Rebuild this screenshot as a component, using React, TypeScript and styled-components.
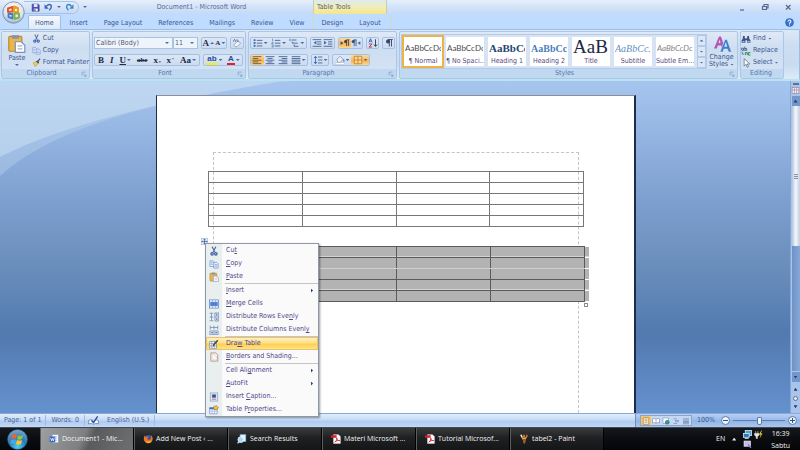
import React from "react";
import styled, { createGlobalStyle, css } from "styled-components";

const GlobalStyle = createGlobalStyle`
  *, *::before, *::after { box-sizing: border-box; }
  body { margin: 0; background: #bfdbff; }
  button, select, input { font: inherit; color: inherit; margin: 0; padding: 0; border: 0; background: none; }
`;

const uiFont = `"DejaVu Sans Condensed", "DejaVu Sans", sans-serif`;
const shellFont = `"Open Sans", "Noto Sans", sans-serif`;

/* ---------- icons ---------- */

const blue = "#3d6cb5";
const lines = (rows: number[][], color = "#445f8c") => (
  <g fill={color}>
    {rows.map(([x, y, w], i) => (
      <rect key={i} x={x} y={y} width={w} height="1.4" />
    ))}
  </g>
);

const glyphs: Record<string, React.ReactNode> = {
  save: (
    <>
      <path d="M2 2h11l1.500 1.500V14.500H2z" fill="#4a50b4" stroke="#33358c" />
      <path d="M5 2h6.500v5H5z" fill="#e8ecfa" />
      <path d="M5 10h7v4.500H5z" fill="#f6f7fd" />
      <path d="M6 11h2v3H6z" fill="#33358c" />
    </>
  ),
  undo: (
    <>
      <path d="M4 6c3-4.500 8-4.500 9-1s-1.500 6-3.500 8" fill="none" stroke="#3a66c0" strokeWidth="2.600" />
      <path d="M1 2v8h7.500z" fill="#3a66c0" />
    </>
  ),
  redo: (
    <>
      <path d="M11.500 6C8.500 1.500 4 2 3 5.500s1 5.500 3 7.500" fill="none" stroke="#3a84c8" strokeWidth="2.600" />
      <path d="M15 2v8H7.500z" fill="#3a84c8" />
    </>
  ),
  cut: (
    <g fill="none" stroke="#2f57a8" strokeWidth="1.800">
      <path d="M5 1l4.500 9M11 1 6.500 10" stroke="#5b6f96" />
      <circle cx="5" cy="12.500" r="2" />
      <circle cx="11" cy="12.500" r="2" />
    </g>
  ),
  copy: (
    <g stroke="#5b83c8" fill="#eef4ff">
      <path d="M1.500 3h5l2 2v7h-7z" />
      <path d="M7.500 5.500h5l2 2v7h-7z" />
      <path d="M3 6h3M3 8.500h3M9 9h4M9 11.500h4" />
    </g>
  ),
  painter: (
    <>
      <path d="M2 9l6-3 3 4-5 5z" fill="#f3cf55" stroke="#b88a22" />
      <path d="M7 6l3-2 3 3-2 3z" fill="#4b5568" />
      <path d="M11 5l3.500-4" stroke="#3c4c7a" strokeWidth="2" />
    </>
  ),
  paste: (
    <>
      <rect x="1.500" y="2" width="11" height="12.500" rx="1" fill="#eab64b" stroke="#b98a34" />
      <path d="M4 1h6v3H4z" fill="#8593ad" />
      <path d="M7 6.500h5l3 3v6H7z" fill="#fff" stroke="#7f93b5" />
      <path d="M9 10h4M9 12.500h4" stroke="#9fb4d8" />
    </>
  ),
  clear: (
    <>
      <path d="M3 11l6-6 5 3-6 6H5z" fill="#f2f4fa" stroke="#7b86a5" />
      <path d="M2 6l2-4 2 4M8 2v3h3" fill="none" stroke="#56688f" strokeWidth="1.300" />
    </>
  ),
  bullets: (
    <>
      {lines([[6, 3, 9], [6, 7.500, 9], [6, 12, 9]])}
      <g fill={blue}>
        <rect x="1" y="2" width="3" height="3" />
        <rect x="1" y="6.500" width="3" height="3" />
        <rect x="1" y="11" width="3" height="3" />
      </g>
    </>
  ),
  numbers: (
    <>
      {lines([[6, 3, 9], [6, 7.500, 9], [6, 12, 9]])}
      <path d="M2.500 1v4M1 7h2.500L1 9.500h3M1 11.500h2.500v3H1" stroke={blue} fill="none" />
    </>
  ),
  multi: (
    <>
      {lines([[4, 2.500, 8], [7, 7.500, 7], [10, 12.500, 5]])}
      <path d="M1.500 1v4M4 6.500h2v3M7 11.500h2v3" stroke={blue} fill="none" strokeWidth="1.400" />
    </>
  ),
  outdent: (
    <>
      {lines([[1, 2, 14], [8, 5.500, 7], [8, 9, 7], [1, 12.500, 14]])}
      <path d="M7 4.500v6L2.500 7.500z" fill={blue} />
    </>
  ),
  indent: (
    <>
      {lines([[1, 2, 14], [8, 5.500, 7], [8, 9, 7], [1, 12.500, 14]])}
      <path d="M1.500 4.500v6L6 7.500z" fill={blue} />
    </>
  ),
  ltr: (
    <>
      <path d="M1 5v6l4.500-3z" fill="#3a4f86" />
      <path d="M10 3h5M10.500 3v10M13.500 3v10" stroke="#3b3b4d" strokeWidth="1.300" />
      <circle cx="9" cy="5.500" r="2.500" fill="#3b3b4d" />
    </>
  ),
  rtl: (
    <>
      <path d="M15 5v6l-4.500-3z" fill="#3a66c0" />
      <path d="M4 3h5M5 3v10M8 3v10" stroke="#3b4a70" strokeWidth="1.300" />
      <circle cx="3.500" cy="5.500" r="2.500" fill="#3b4a70" />
    </>
  ),
  sort: (
    <>
      <path d="M1.500 7 4 1l2.500 6M2.500 5h3" stroke="#2f57b8" fill="none" strokeWidth="1.400" />
      <path d="M1.500 9.500h5l-5 5h5" stroke="#a33350" fill="none" strokeWidth="1.400" />
      <path d="M12 2v11M9.500 10.500 12 13.500l2.500-3" stroke="#333c55" fill="none" strokeWidth="1.500" />
    </>
  ),
  pilcrow: (
    <>
      <path d="M6 2.500h8M8.500 2.500v11M12 2.500v11" stroke="#39466b" strokeWidth="1.500" />
      <circle cx="6.500" cy="5.500" r="3.300" fill="#39466b" />
    </>
  ),
  alignLeft: lines([[1, 2, 14], [1, 4.800, 9], [1, 7.600, 14], [1, 10.400, 9], [1, 13.200, 14]], "#6b553a"),
  alignCenter: lines([[1, 2, 14], [4, 4.800, 8], [1, 7.600, 14], [4, 10.400, 8], [1, 13.200, 14]]),
  alignRight: lines([[1, 2, 14], [6, 4.800, 9], [1, 7.600, 14], [6, 10.400, 9], [1, 13.200, 14]]),
  justify: lines([[1, 2, 14], [1, 4.800, 14], [1, 7.600, 14], [1, 10.400, 14], [1, 13.200, 14]]),
  spacing: (
    <>
      {lines([[8, 2.500, 7], [8, 7.300, 7], [8, 12, 7]])}
      <path d="M4 2v12M1.500 5 4 2l2.500 3M1.500 11 4 14l2.500-3" stroke={blue} fill="none" strokeWidth="1.500" />
    </>
  ),
  bucket: (
    <>
      <path d="M3 7l5-5 5 5-5 5H5z" fill="#eef1f8" stroke="#6c7ba0" />
      <path d="M13 7c2 2 1.500 4 .5 4" stroke={blue} fill="none" strokeWidth="1.600" />
      <rect x="1" y="12.500" width="14" height="3" fill="#fff" stroke="#9aa5bd" strokeWidth=".6" />
    </>
  ),
  borders: (
    <path d="M2 2h12v12H2zM8 2v12M2 8h12" fill="#fbd68c" stroke="#b9762a" strokeWidth="1.200" />
  ),
  find: (
    <g fill="#3b5484">
      <path d="M3 3h3v3l1 1h2l1-1V3h3v4l2 3v4h-5v-4H7v4H1v-4l2-3z" />
      <path d="M2.500 11h3v2h-3zM11 11h3v2h-3z" fill="#a9c2ea" />
    </g>
  ),
  replace: (
    <>
      <path d="M1 6.500V3.500h3v3.500H1.500M6 1v6h3V4H6" stroke="#46597f" fill="none" strokeWidth="1.400" />
      <path d="M7 14.500v-4h3v4M15 10.500h-3v4h3" stroke="#2d8a4a" fill="none" strokeWidth="1.500" />
      <path d="M2 9v4h3" stroke={blue} fill="none" strokeWidth="1.300" />
    </>
  ),
  pointer: <path d="M5 1v12l3-3 2 5 2-1-2-4.500h4z" fill="#fff" stroke="#5b6a8a" strokeWidth="1.200" />,
  merge: (
    <>
      <rect x="1" y="1.500" width="14" height="13" fill="#fff" stroke="#3d6cb5" />
      <path d="M1 5h14M1 11h14M5.500 2v3M10.500 2v3M5.500 11v3M10.500 11v3" stroke="#6f97d6" />
      <rect x="2" y="5" width="12" height="6" fill="#4a80d6" />
    </>
  ),
  distRows: (
    <>
      <path d="M1 2h6M1 8h6M1 14h6M4 2v12M9.500 1.500h6v13h-6zM9.500 8h6" fill="none" stroke="#6f8fbd" strokeWidth="1.300" />
      <path d="M12.500 3v3M12.500 10v3" stroke="#2f57a8" strokeWidth="1.500" />
    </>
  ),
  distCols: (
    <>
      <path d="M2 1v6M8 1v6M14 1v6M2 4h12M1.500 9.500v6h13v-6zM8 9.500v6" fill="none" stroke="#6f8fbd" strokeWidth="1.300" />
      <path d="M3.500 12.500h3M10 12.500h3" stroke="#2f57a8" strokeWidth="1.500" />
    </>
  ),
  drawTable: (
    <>
      <path d="M1 4h11v11H1zM1 7.500h11M1 11h11M4.500 4v11M8.500 4v11" fill="#fff" stroke="#5b83c8" />
      <path d="M7 10l7-8" stroke="#554a2d" strokeWidth="2.400" />
      <path d="M6 12l.5-2.500L8.500 11z" fill="#222" />
    </>
  ),
  pageBorder: (
    <>
      <path d="M3 1.500h8l3 3v10H3z" fill="#fff" stroke="#b98a62" strokeWidth="1.400" />
      <path d="M5 4h4.500v2H12v6.500H5z" fill="#f4f7fd" stroke="#c9d3e6" />
    </>
  ),
  caption: (
    <>
      <rect x="2" y="1.500" width="12" height="13" fill="#dbe5f6" stroke="#8298c0" />
      <rect x="5" y="4" width="6" height="5" fill="#39528a" />
      <path d="M5 11.500h6" stroke="#a33350" />
    </>
  ),
  tableProps: (
    <>
      <path d="M1 4h12v10H1z" fill="#fff" stroke="#5b83c8" />
      <path d="M1 4h12v3H1z" fill="#3f72c8" />
      <path d="M1 10h12M5 7v7M9 7v7" stroke="#8aa8dc" />
      <path d="M7 3l5-2 3 3-3 4-4-1z" fill="#f0c04a" stroke="#9b7420" />
    </>
  ),
  help: (
    <>
      <circle cx="8" cy="8" r="7" fill="#3a75d0" stroke="#2453a0" />
      <path d="M5.500 6c0-3.500 5-3 5 0 0 2-2.500 2-2.500 4M8 11.500v2" stroke="#fff" strokeWidth="1.800" fill="none" />
    </>
  ),
  move: (
    <>
      <rect x=".5" y=".5" width="15" height="15" fill="#eaf1fc" stroke="#8ca0c4" />
      <path d="M8 2v12M2 8h12M6 4l2-2 2 2M6 12l2 2 2-2M4 6 2 8l2 2M12 6l2 2-2 2" stroke="#2f4f9a" fill="none" strokeWidth="1.500" />
    </>
  ),
  proof: (
    <>
      <path d="M1 8c3-2 5-1 7 1 2-2 4-3 7-1v5c-3-1-5-1-7 1-2-2-4-2-7-1z" fill="#fff" stroke="#51699c" />
      <path d="M5 8l3 3 6-9" stroke="#2b4fa5" strokeWidth="2" fill="none" />
    </>
  ),
  viewPrint: <path d="M2.500 1.500h11v13h-11zM5 4.500h6M5 7.500h6M5 10.500h6" fill="#fffbe9" stroke="#8b6b3a" strokeWidth="1.200" />,
  viewRead: <path d="M1 4c3-1.500 5-1 7 1 2-2 4-2.500 7-1v8c-3-1-5-1-7 1-2-2-4-2-7-1zM8 5v8" fill="#fff" stroke="#6b7f9f" strokeWidth="1.200" />,
  viewWeb: (
    <>
      <path d="M2 2h11v11H2z" fill="#fff" stroke="#6b7f9f" />
      <circle cx="10.500" cy="10.500" r="4" fill="#3a9a6c" stroke="#2a63b5" />
    </>
  ),
  viewOutline: lines([[3, 3, 7], [6, 6, 8], [6, 9, 8], [3, 12, 7]], "#7b8fb3"),
  viewDraft: lines([[2, 3, 12], [2, 5.500, 12], [2, 8, 12], [2, 10.500, 12], [2, 13, 12]], "#6f84aa"),
  word: (
    <>
      <rect x="5" y="1" width="10" height="13" fill="#fff" stroke="#7d9bd0" />
      <path d="M9 4h4M9 7h4M9 10h4" stroke="#8aa8dc" />
      <rect x="1" y="4" width="9" height="9" rx="1" fill="#3865bd" />
      <path d="M2.500 6l1.500 5 1.500-4L7 11l1.500-5" stroke="#fff" fill="none" strokeWidth="1.200" />
    </>
  ),
  firefox: (
    <>
      <circle cx="8.500" cy="7.500" r="6" fill="#3553b0" />
      <path d="M3 2c-3 5-2 10 2 12 5 2.500 11-1 10.500-7C15 4 13 2 12 2c2 3 1 6-1 7-3 1-5-1-4-3l2-1C7 3 5 4 4 5z" fill="#f0761c" />
      <path d="M3 9c2 4 7 5 11 1-1 5-8 7-11-1z" fill="#fbc02d" />
    </>
  ),
  results: (
    <>
      <path d="M5 1h9v11H5z" fill="#e8f3fb" stroke="#7fb3d8" />
      <circle cx="6" cy="9" r="4.500" fill="#a9d6f3" stroke="#e6f4fc" strokeWidth="1.400" />
      <path d="M3 12 1 15" stroke="#d4e5f2" strokeWidth="2" />
    </>
  ),
  pdf: (
    <>
      <path d="M4 1h8l3 3v11H4z" fill="#fff" stroke="#c9c9c9" />
      <path d="M0 2h9v4H0z" fill="#d21f26" />
      <path d="M6 13c3-2 4-5 3-7 0 3 2 5 5 4.500-3-.5-6 .5-8 2.500z" fill="none" stroke="#d21f26" strokeWidth="1.300" />
    </>
  ),
  paint: (
    <>
      <path d="M3 2l4 7M8 1v8M13 2 9.500 9" stroke="#d9a04a" strokeWidth="2.200" />
      <path d="M3 1l2 4" stroke="#e9e4d8" strokeWidth="2" />
      <path d="M6 8h5l-1 7H7z" fill="#a95a2a" />
      <path d="M12 1l1 3" stroke="#d8442c" strokeWidth="2" />
    </>
  ),
  network: (
    <>
      <rect x="4" y="1" width="11" height="9" fill="#3fa0d8" stroke="#dff0fa" strokeWidth="1.400" />
      <rect x="1" y="6" width="10" height="7" fill="#2a78b8" stroke="#dff0fa" strokeWidth="1.400" />
      <path d="M3 15h7" stroke="#dff0fa" strokeWidth="1.500" />
    </>
  ),
  power: (
    <>
      <path d="M3 2v4M7 2v4M1 6h8v3l-3 3v3H4v-3L1 9z" fill="#e8e8e8" stroke="#e8e8e8" />
      <path d="M13 1 9 8h3l-2 7 5-9h-3l2-5z" fill="#f2e12c" />
    </>
  ),
  volume: (
    <>
      <rect x="2" y="2" width="11" height="9" fill="#c3b8e8" stroke="#f2f0fa" strokeWidth="1.400" />
      <path d="M9 8l5 6" stroke="#8d78c8" strokeWidth="2.600" />
    </>
  ),
  launcher: <path d="M3 12V3h9M7 8l6 6M13 9v5H8" fill="none" stroke="#7390bd" strokeWidth="1.600" />,
  ruler: (
    <>
      <rect x="2" y="3" width="12" height="10" fill="#f2f4f8" stroke="#8a7f98" />
      <path d="M2 7h12M6 3v10M10 3v10" stroke="#a8687a" />
    </>
  ),
};

const Svg = styled.svg<{ $s: number }>`
  width: ${(p) => p.$s}px;
  height: ${(p) => p.$s}px;
  flex: none;
  display: block;
`;
const Icon = ({ name, size = 10 }: { name: string; size?: number }) => (
  <Svg viewBox="0 0 16 16" $s={size} aria-hidden="true">
    {glyphs[name]}
  </Svg>
);

const Caret = styled.i<{ $up?: boolean }>`
  flex: none;
  width: 4px;
  height: 2px;
  background: #4c6ca4;
  clip-path: ${(p) => (p.$up ? "polygon(50% 0, 100% 100%, 0 100%)" : "polygon(0 0, 100% 0, 50% 100%)")};
`;

/* ---------- frame ---------- */

const Screen = styled.div`
  position: relative;
  min-height: 100vh;
  display: flex;
  flex-direction: column;
  font: 7px/9px ${uiFont};
  color: #3a5590;
`;

const TitleBar = styled.header`
  display: flex;
  height: 14px;
  background: linear-gradient(#e6effb, #d6e5f9 40%, #c5daf6);
`;
const QuickArea = styled.div`
  flex: 0 0 90px;
  display: flex;
  align-items: center;
  gap: 4px;
  padding-left: 24px;
`;
const QuickBar = styled.div`
  display: flex;
  align-items: center;
  justify-content: space-evenly;
  width: 55px;
  height: 13px;
  padding-left: 3px;
  border: 1px solid #a9c1e4;
  border-left: 0;
  border-radius: 0 7px 7px 0;
  background: linear-gradient(#e3edfa, #c6daf4);
`;
const IconButton = styled.button`
  display: flex;
  align-items: center;
  justify-content: center;
`;
const WindowTitle = styled.h1`
  flex: 0 0 223px;
  margin: 0;
  padding-top: 3px;
  text-align: center;
  font: inherit;
  color: #5b6a95;
`;
const ToolTab = styled.div`
  flex: 0 0 74px;
  padding: 3px 0 0 3px;
  border: solid #c9cfae;
  border-width: 0 1px;
  background: linear-gradient(#dfeaf2, #f0eeb4 55%, #f6e588);
  color: #5b5f6a;
`;
const WindowButtons = styled.div`
  margin-left: auto;
  display: flex;
  align-items: center;
  gap: 13px;
  padding-right: 7px;
`;
const WinSvg = styled.svg`
  width: 10px;
  height: 10px;
  fill: none;
  stroke: #56688f;
  stroke-width: 1.2;
`;

const Orb = styled.button`
  position: absolute;
  left: 2px;
  top: 1px;
  width: 23px;
  height: 23px;
  z-index: 2;
`;

const TabRow = styled.nav`
  display: flex;
  align-items: flex-end;
  height: 15px;
  padding: 0 6px 0 28px;
  background: #bfdbff;
`;
const Tab = styled.button<{ $on?: boolean }>`
  height: 14px;
  padding: 2px 7px 0;
  margin-right: 2px;
  border-radius: 2px 2px 0 0;
  white-space: nowrap;
  ${(p) =>
    p.$on &&
    css`
      padding: 2px 6px 0;
      border: 1px solid #9cc0ea;
      border-bottom: 0;
      background: linear-gradient(#f5f9fe, #e0eaf7);
    `}
`;
const ToolTabs = styled.div`
  display: flex;
  border: solid #d3d8b6;
  border-width: 0 1px;
`;
const HelpSlot = styled.div`
  margin-left: auto;
  padding-bottom: 2px;
`;

/* ---------- ribbon ---------- */

const Ribbon = styled.section`
  display: flex;
  gap: 2px;
  height: 52px;
  padding: 1px 1px 0;
  border: 1px solid #9dbde4;
  border-width: 1px 1px 2px 0;
  border-bottom-color: #b9e3ee;
  border-radius: 2px 2px 3px 3px;
  background: linear-gradient(#dde8f6, #cddef2 30%, #c9dbf0 70%, #dbebf8);
`;
const Group = styled.section<{ $w: number }>`
  flex: 0 0 ${(p) => p.$w}px;
  min-width: 0;
  display: flex;
  flex-direction: column;
  border: 1px solid #abc6e6;
  border-radius: 2px;
  background: linear-gradient(#dfe9f6, #cedef1 35%, #d4e3f4);
`;
const GroupBody = styled.div`
  flex: 1;
  min-height: 0;
  display: flex;
`;
const GroupLabel = styled.footer`
  display: flex;
  align-items: center;
  height: 9px;
  padding-right: 2px;
  background: #c1d8f1;
  color: #5676ae;
  span { flex: 1; text-align: center; }
`;
const BigButton = styled.button<{ $w: number }>`
  width: ${(p) => p.$w}px;
  display: flex;
  flex-direction: column;
  align-items: center;
  padding-top: 2px;
  line-height: 7px;
`;
const PasteButton = styled(BigButton)`
  gap: 2px;
`;
const BigLabel = styled.span`
  display: flex;
  align-items: center;
  gap: 2px;
`;
const Stack = styled.div`
  display: flex;
  flex-direction: column;
  justify-content: space-between;
  padding: 1px 0 1px;
`;
const SmallButton = styled.button`
  display: flex;
  align-items: center;
  gap: 2px;
  height: 11px;
  white-space: nowrap;
`;
const Rows = styled.div`
  display: flex;
  flex-direction: column;
  gap: 5px;
  padding: 5px 1px 0;
`;
const Row = styled.div`
  display: flex;
  gap: 3px;
  height: 12px;
`;
const Cluster = styled.div<{ $w: number }>`
  display: flex;
  align-items: stretch;
  flex: 0 0 ${(p) => p.$w}px;
  border: 1px solid #a5c0e2;
  border-radius: 2px;
  background: linear-gradient(#dbe7f6, #ccdcf1);
`;
const Tool = styled.button<{ $on?: boolean }>`
  flex: 1 1 auto;
  display: flex;
  align-items: center;
  justify-content: center;
  gap: 1px;
  color: #232c45;
  font-family: "Liberation Serif", serif;
  font-size: 9px;
  font-weight: bold;
  line-height: 9px;
  ${(p) => p.$on && "background: linear-gradient(#fbd9a0, #f9b552 60%, #fdd98a);"}
`;
const SmallText = styled.span`
  font-size: 7px;
`;
const ColorBar = styled.span<{ $c: string }>`
  height: 10px;
  padding: 0 1px;
  line-height: 8px;
  font-family: "Liberation Sans", sans-serif;
  font-size: 8px;
  color: #2c4a96;
  border-bottom: 2px solid ${(p) => p.$c};
`;
const Combo = styled.label<{ $w: number }>`
  width: ${(p) => p.$w}px;
  height: 12px;
  display: flex;
  align-items: center;
  padding: 0 3px 0 1px;
  border: 1px solid #a9c3e6;
  background: #eef4fc;
  color: #5a5478;
  select {
    flex: 1;
    min-width: 0;
    appearance: none;
    outline: none;
    line-height: 9px;
  }
`;
const ComboRow = styled.div`
  display: flex;
`;

const Gallery = styled.div`
  flex: none;
  display: flex;
  margin: 2px 0 2px 1px;
  height: 35px;
  border: 1px solid #b3cbea;
  background: #d5e3f4;
`;
const StyleTile = styled.button<{ $on?: boolean }>`
  width: 42px;
  display: flex;
  flex-direction: column;
  justify-content: flex-end;
  overflow: hidden;
  border: 2px solid ${(p) => (p.$on ? "#eeb344" : "#d5e3f4")};
  background: #fff;
  white-space: nowrap;
  color: #584a80;
`;
const Preview = styled.span<{ $k: string }>`
  display: block;
  width: 36px;
  margin: 0 1px;
  overflow: hidden;
  text-align: left;
  color: #4a4a4a;
  font: 8px/15px Lato, sans-serif;
  ${(p) => p.$k === "h1" && `font: bold 11px/15px "Liberation Serif", serif; color: #1f4674;`}
  ${(p) => p.$k === "h2" && `font: bold 10px/15px "Liberation Serif", serif; color: #4a7fbb;`}
  ${(p) => p.$k === "title" && `font: 19px/18px "Liberation Serif", serif; color: #1c2a44;`}
  ${(p) => p.$k === "sub" && `font: italic 10px/15px "Liberation Serif", serif; color: #5f8fc4;`}
  ${(p) => p.$k === "em" && `font: italic 8px/15px Lato, sans-serif; color: #858585;`}
`;
const TileName = styled.span`
  display: block;
  width: 100%;
  text-align: center;
  line-height: 10px;
`;
const GalleryNav = styled.div`
  display: flex;
  flex-direction: column;
  width: 9px;
  margin-left: 1px;
  button {
    flex: 1;
    display: flex;
    align-items: center;
    justify-content: center;
    border: 1px solid #b3c9e6;
    background: #dbe7f6;
  }
`;
const BigSvg = styled.svg`
  flex: none;
  width: 20px;
  height: 20px;
`;

/* ---------- document ---------- */

const Workspace = styled.main`
  position: relative;
  flex: 1;
  display: flex;
  background: linear-gradient(#a6c6ef, #92b3e0 18%, #7d9fcf 36%, #688cba 58%, #527ab0 76%, #6591cd);
`;
const Swoosh = styled.svg`
  position: absolute;
  left: 0;
  top: 0;
  width: 300px;
  height: 100px;
`;
const Desk = styled.div`
  position: relative;
  flex: 1;
  display: flex;
  justify-content: center;
`;
const Page = styled.article`
  flex: 0 1 480px;
  display: flex;
  margin: 14px 0 0 2px;
  padding: 56px 55px 0 56px;
  border: solid #1d2b4d;
  border-width: 1px 2px 0 1px;
  border-top-color: #8a8f99;
  background: #fff;
`;
const TextArea = styled.div`
  flex: 1;
  border: 1px dashed #c4c4c4;
  border-bottom: 0;
`;
const TableBlock = styled.div<{ $top: number }>`
  position: relative;
  margin: ${(p) => p.$top}px -6px 0;
`;
const Grid = styled.table<{ $sel?: boolean }>`
  width: 100%;
  border-collapse: collapse;
  table-layout: fixed;
  td {
    height: 11px;
    padding: 0;
    border: 1px solid #777;
  }
  ${(p) =>
    p.$sel &&
    css`
      width: calc(100% + 5px);
      td { background: #b3b3b3; border-color: #5a5a5a; }
      tr:nth-child(3n + 1) td { box-shadow: inset 0 -1px #d4d4d4; }
      tr:nth-child(3) td { border-top-color: #d0d0d0; }
      tr:nth-child(2) td { border-bottom-color: #d0d0d0; }
      tr td:last-child { width: 5px; border-color: #fff; border-left-color: #5a5a5a; border-right: 0; }
    `}
`;
const MoveHandle = styled.div`
  position: absolute;
  left: -7px;
  top: -8px;
`;
const SizeHandle = styled.div`
  position: absolute;
  right: -4px;
  bottom: -5px;
  width: 4px;
  height: 4px;
  border: 1px solid #8a8a8a;
  background: #fff;
`;

const Menu = styled.div`
  position: absolute;
  left: -3px;
  top: -3px;
  z-index: 3;
  width: 114px;
  border: 1px solid #8f98a8;
  background: linear-gradient(90deg, #e9eeee 0 16px, #fafafa 16px);
  box-shadow: 1px 1px 2px rgba(0, 0, 0, 0.4);
`;
const MenuItem = styled.button<{ $on?: boolean }>`
  display: flex;
  align-items: center;
  width: 100%;
  height: 13px;
  padding: 0 5px 0 3px;
  gap: 7px;
  text-align: left;
  white-space: nowrap;
  color: #51478c;
  ${(p) => p.$on && "background: linear-gradient(#fff3c8, #ffe08a 45%, #ffd04f 55%, #ffe594); box-shadow: inset 0 0 0 1px #e9c26a;"}
`;
const IconSlot = styled.span`
  flex: 0 0 10px;
`;
const MenuText = styled.span`
  flex: 1;
`;
const SubArrow = styled.i`
  width: 2px;
  height: 4px;
  background: #2c3e74;
  clip-path: polygon(0 0, 100% 50%, 0 100%);
`;
const Divider = styled.hr`
  height: 1px;
  margin: 0 0 0 19px;
  border: 0;
  background: #c5c5c5;
`;

const ScrollCol = styled.aside`
  position: relative;
  flex: 0 0 10px;
  display: flex;
  flex-direction: column;
  align-items: center;
  gap: 1px;
  padding-top: 2px;
  border-left: 1px solid #88a6d2;
  background: #a8c4ec;
`;
const Splitter = styled.div`
  width: 6px;
  height: 2px;
  background: #5d7396;
`;
const Track = styled.div`
  flex: 1;
  width: 8px;
  display: flex;
  flex-direction: column;
  background: linear-gradient(90deg, #6e92c6, #86a8d8);
`;
const ArrowButton = styled.button`
  flex: none;
  width: 8px;
  height: 10px;
  display: flex;
  align-items: center;
  justify-content: center;
  background: #7397cd;
`;
const Thumb = styled.div`
  flex: 0 0 51%;
  display: flex;
  align-items: center;
  justify-content: center;
  border-radius: 1px;
  background: linear-gradient(90deg, #b5c4db, #f4f7fb 45%, #c2cfe3);
`;
const Grip = styled.i`
  width: 4px;
  height: 5px;
  background: repeating-linear-gradient(#8795ab 0 1px, #dfe5ee 1px 2px);
`;
const PageNav = styled.div`
  flex: 0 0 30px;
  display: flex;
  flex-direction: column;
  align-items: center;
  justify-content: space-evenly;
`;
const DarkCaret = styled(Caret)`
  height: 3px;
  background: #2b3c60;
`;
const Ball = styled.i`
  width: 5px;
  height: 5px;
  border: 1px solid #5d6f90;
  border-radius: 50%;
  background: #e9eef6;
`;

/* ---------- status bar ---------- */

const StatusBar = styled.footer`
  display: flex;
  height: 14px;
  background: linear-gradient(#e1edfb, #c9def7 40%, #aecbf2 60%, #c3daf7);
  border-top: 1px solid #88a9d8;
`;
const StatusCell = styled.span<{ $p: number; $open?: boolean }>`
  display: flex;
  align-items: center;
  margin: 1px 0;
  padding: 0 ${(p) => p.$p}px;
  border-right: ${(p) => (p.$open ? 0 : 1)}px solid #9fbbe3;
  color: #4c5d94;
`;
const StatusTools = styled.div`
  margin-left: auto;
  flex: 0 0 165px;
  min-width: 0;
  display: flex;
  align-items: center;
  gap: 3px;
  padding: 0 3px 0 4px;
  border-left: 1px solid #6e8fc2;
  background: linear-gradient(#b8d1f4, #93b5e6 55%, #a9c6ef);
`;
const Views = styled.div`
  flex: none;
  display: flex;
  height: 11px;
  border: 1px solid #88a5d2;
  background: #c4d8f3;
`;
const ViewButton = styled.button<{ $on?: boolean }>`
  width: 10px;
  display: flex;
  align-items: center;
  justify-content: center;
  ${(p) => p.$on && "background: #f9c566;"}
`;
const ZoomValue = styled.span`
  padding: 0 3px 0 2px;
`;
const RoundButton = styled.button`
  flex: none;
  width: 9px;
  height: 9px;
  border: 1px solid #5c79ab;
  border-radius: 50%;
  background: #eef4fc;
  display: flex;
  align-items: center;
  justify-content: center;
`;
const Sign = styled.i<{ $plus?: boolean }>`
  width: 5px;
  height: 5px;
  background: linear-gradient(#33507f, #33507f) center / 5px 1px no-repeat
    ${(p) => p.$plus && ", linear-gradient(#33507f, #33507f) center / 1px 5px no-repeat"};
`;
const Zoom = styled.input`
  && {
    flex: 1;
    width: 0;
    min-width: 0;
    height: 9px;
    appearance: none;
    background: linear-gradient(#5f7eb2, #5f7eb2) center / 100% 1px no-repeat;
  }
  &::-webkit-slider-thumb {
    appearance: none;
    width: 5px;
    height: 8px;
    border: 1px solid #5c79ab;
    border-radius: 1px 1px 2px 2px;
    background: #eef4fc;
  }
`;

/* ---------- taskbar ---------- */

const TaskBar = styled.footer`
  display: flex;
  height: 23px;
  border-top: 1px solid #45484d;
  background: linear-gradient(#15181d, #0a0c10 50%, #050608);
  color: #f4f4f4;
  font: 7px/10px ${shellFont};
`;
const StartArea = styled.button`
  flex: 0 0 40px;
  display: flex;
  align-items: center;
  padding-left: 7px;
`;
const Task = styled.button<{ $on?: boolean }>`
  flex: 0 1 94px;
  min-width: 0;
  display: flex;
  align-items: center;
  gap: 3px;
  padding-left: 8px;
  border: solid #5b5d61;
  border-width: 0 1px 0 1px;
  border-right-color: #000;
  white-space: nowrap;
  background: ${(p) =>
    p.$on ? "linear-gradient(115deg, #9d9fa1, #7d7f81 45%, #595b5d 55%, #6d6f71)" : "linear-gradient(#3a3b3d, #1f2021 45%, #151617)"};
`;
const Tray = styled.div`
  margin-left: auto;
  display: flex;
  align-items: center;
  gap: 7px;
  padding-right: 10px;
`;
const TrayIcons = styled.div`
  display: grid;
  grid-template-columns: 10px 10px;
  gap: 1px;
`;
const Clock = styled.div`
  display: flex;
  flex-direction: column;
  align-items: center;
  gap: 3px;
  line-height: 9px;
`;
const TrayCaret = styled(Caret)`
  background: #e8e8e8;
  height: 3px;
`;

/* ---------- data ---------- */

const menuItems: ({ icon?: string; text: [string, string, string]; sub?: boolean; on?: boolean } | null)[] = [
  { icon: "cut", text: ["Cu", "t", ""] },
  { icon: "copy", text: ["", "C", "opy"] },
  { icon: "paste", text: ["", "P", "aste"] },
  null,
  { text: ["", "I", "nsert"], sub: true },
  { icon: "merge", text: ["", "M", "erge Cells"] },
  { icon: "distRows", text: ["Distribute Rows Eve", "n", "ly"] },
  { icon: "distCols", text: ["Distribute Columns Evenl", "y", ""] },
  null,
  { icon: "drawTable", text: ["Dra", "w", " Table"], on: true },
  { icon: "pageBorder", text: ["", "B", "orders and Shading..."] },
  null,
  { text: ["Cell Ali", "g", "nment"], sub: true },
  { text: ["", "A", "utoFit"], sub: true },
  { icon: "caption", text: ["Insert ", "C", "aption..."] },
  { icon: "tableProps", text: ["Table P", "r", "operties..."] },
];

const styleTiles: [string, string, string][] = [
  ["n", "AaBbCcDc", "¶ Normal"],
  ["n", "AaBbCcDc", "¶ No Spaci..."],
  ["h1", "AaBbCc", "Heading 1"],
  ["h2", "AaBbCc", "Heading 2"],
  ["title", "AaB", "Title"],
  ["sub", "AaBbCc.", "Subtitle"],
  ["em", "AaBbCcDc", "Subtle Em..."],
];

const tasks: [string, string][] = [
  ["word", "Document1 - Mic..."],
  ["firefox", "Add New Post ‹ ..."],
  ["results", "Search Results"],
  ["pdf", "Materi Microsoft ..."],
  ["pdf", "Tutorial Microsof..."],
  ["paint", "tabel2 - Paint"],
];

const Label = ({ children, launcher = true }: { children: string; launcher?: boolean }) => (
  <GroupLabel>
    <span>{children}</span>
    {launcher && (
      <IconButton aria-label={`${children} options`}>
        <Icon name="launcher" size={6} />
      </IconButton>
    )}
  </GroupLabel>
);

const ToolIcon = ({ name, on, caret }: { name: string; on?: boolean; caret?: boolean }) => (
  <Tool aria-label={name} $on={on}>
    <Icon name={name} size={10} />
    {caret && <Caret />}
  </Tool>
);

const DocTable = ({ selected }: { selected?: boolean }) => (
  <Grid $sel={selected}>
    <tbody>
      {[0, 1, 2, 3, 4].map((r) => (
        <tr key={r}>
          {[0, 1, 2, 3].map((c) => (
            <td key={c} />
          ))}
          {selected && <td />}
        </tr>
      ))}
    </tbody>
  </Grid>
);

export default function App() {
  return (
    <>
      <GlobalStyle />
      <Screen>
        <Orb aria-label="Office Button">
          <svg viewBox="0 0 46 46" width="23" height="23">
            <defs>
              <radialGradient id="orb" cx="50%" cy="35%" r="65%">
                <stop offset="0" stopColor="#ffffff" />
                <stop offset=".7" stopColor="#dde3ec" />
                <stop offset="1" stopColor="#93a5c0" />
              </radialGradient>
            </defs>
            <circle cx="23" cy="23" r="21.500" fill="url(#orb)" stroke="#8197b8" strokeWidth="2" />
            <g fill="none" strokeWidth="4" strokeLinejoin="round">
              <path d="M12 15l9-3v9l-9 1z" stroke="#e0562b" />
              <path d="M24 11l8 3v8h-8z" stroke="#f29b1d" />
              <path d="M13 26h8v9l-8-3z" stroke="#3f7fd0" />
              <path d="M25 25h9v8l-9 3z" stroke="#7cb342" />
            </g>
          </svg>
        </Orb>

        <TitleBar>
          <QuickArea>
            <QuickBar>
              <IconButton aria-label="Save"><Icon name="save" size={9} /></IconButton>
              <IconButton aria-label="Undo"><Icon name="undo" size={9} /></IconButton>
              <Caret />
              <IconButton aria-label="Redo"><Icon name="redo" size={9} /></IconButton>
            </QuickBar>
            <Caret />
          </QuickArea>
          <WindowTitle>Document1 - Microsoft Word</WindowTitle>
          <ToolTab>Table Tools</ToolTab>
          <WindowButtons>
            <IconButton aria-label="Minimize"><WinSvg viewBox="0 0 10 10"><path d="M3 8h4" /></WinSvg></IconButton>
            <IconButton aria-label="Restore"><WinSvg viewBox="0 0 10 10"><path d="M2.500 4.500h4v3h-4zM4 4V2.500h4V6H7" /></WinSvg></IconButton>
            <IconButton aria-label="Close"><WinSvg viewBox="0 0 10 10"><path d="M3 3l4.500 4.500M7.500 3 3 7.500" /></WinSvg></IconButton>
          </WindowButtons>
        </TitleBar>

        <TabRow>
          <Tab $on>Home</Tab>
          {["Insert", "Page Layout", "References", "Mailings", "Review", "View"].map((t) => (
            <Tab key={t}>{t}</Tab>
          ))}
          <ToolTabs>
            <Tab>Design</Tab>
            <Tab>Layout</Tab>
          </ToolTabs>
          <HelpSlot>
            <IconButton aria-label="Help"><Icon name="help" size={9} /></IconButton>
          </HelpSlot>
        </TabRow>

        <Ribbon>
          <Group $w={89}>
            <GroupBody>
              <PasteButton $w={30}>
                <Icon name="paste" size={19} />
                <BigLabel>Paste</BigLabel>
                <Caret />
              </PasteButton>
              <Stack>
                <SmallButton><Icon name="cut" size={9} />Cut</SmallButton>
                <SmallButton><Icon name="copy" size={9} />Copy</SmallButton>
                <SmallButton><Icon name="painter" size={9} />Format Painter</SmallButton>
              </Stack>
            </GroupBody>
            <Label>Clipboard</Label>
          </Group>

          <Group $w={154}>
            <GroupBody>
              <Rows>
                <Row>
                  <ComboRow>
                    <Combo $w={79}>
                      <select aria-label="Font"><option>Calibri (Body)</option></select>
                      <Caret />
                    </Combo>
                    <Combo $w={25}>
                      <select aria-label="Font size"><option>11</option></select>
                      <Caret />
                    </Combo>
                  </ComboRow>
                  <Cluster $w={26}>
                    <Tool aria-label="Grow font">A<Caret $up /></Tool>
                    <Tool aria-label="Shrink font"><SmallText>A</SmallText><Caret /></Tool>
                  </Cluster>
                  <Cluster $w={14}><ToolIcon name="clear" /></Cluster>
                </Row>
                <Row>
                  <Cluster $w={106}>
                    <Tool aria-label="Bold">B</Tool>
                    <Tool aria-label="Italic"><em>I</em></Tool>
                    <Tool aria-label="Underline"><u>U</u><Caret /></Tool>
                    <Tool aria-label="Strikethrough"><SmallText as="s">abe</SmallText></Tool>
                    <Tool aria-label="Subscript">x<SmallText>,</SmallText></Tool>
                    <Tool aria-label="Superscript">x<SmallText>'</SmallText></Tool>
                    <Tool aria-label="Change case">Aa<Caret /></Tool>
                  </Cluster>
                  <Cluster $w={40}>
                    <Tool aria-label="Highlight"><ColorBar $c="#f5ee1f">ab</ColorBar><Caret /></Tool>
                    <Tool aria-label="Font color"><ColorBar $c="#e02424">A</ColorBar><Caret /></Tool>
                  </Cluster>
                </Row>
              </Rows>
            </GroupBody>
            <Label>Font</Label>
          </Group>

          <Group $w={149}>
            <GroupBody>
              <Rows>
                <Row>
                  <Cluster $w={57}>
                    <ToolIcon name="bullets" caret />
                    <ToolIcon name="numbers" caret />
                    <ToolIcon name="multi" caret />
                  </Cluster>
                  <Cluster $w={25}><ToolIcon name="outdent" /><ToolIcon name="indent" /></Cluster>
                  <Cluster $w={25}><ToolIcon name="ltr" on /><ToolIcon name="rtl" /></Cluster>
                  <Cluster $w={13}><ToolIcon name="sort" /></Cluster>
                  <Cluster $w={13}><ToolIcon name="pilcrow" /></Cluster>
                </Row>
                <Row>
                  <Cluster $w={58}>
                    <ToolIcon name="alignLeft" on />
                    <ToolIcon name="alignCenter" />
                    <ToolIcon name="alignRight" />
                    <ToolIcon name="justify" caret />
                  </Cluster>
                  <Cluster $w={18}><ToolIcon name="spacing" caret /></Cluster>
                  <Cluster $w={38}><ToolIcon name="bucket" caret /><ToolIcon name="borders" on caret /></Cluster>
                </Row>
              </Rows>
            </GroupBody>
            <Label>Paragraph</Label>
          </Group>

          <Group $w={339}>
            <GroupBody>
              <Gallery>
                {styleTiles.map(([kind, sample, name], i) => (
                  <StyleTile key={name} $on={i === 0}>
                    <Preview $k={kind}>{sample}</Preview>
                    <TileName>{name}</TileName>
                  </StyleTile>
                ))}
                <GalleryNav>
                  <button aria-label="Previous styles"><Caret $up /></button>
                  <button aria-label="Next styles"><Caret /></button>
                  <button aria-label="More styles"><Caret /></button>
                </GalleryNav>
              </Gallery>
              <BigButton $w={29}>
                <BigSvg viewBox="0 0 20 19">
                  <path d="M2 14 7 2h2l4 12h-3l-.8-3H5.800l-1 3zM6.500 8.500h2L7.700 5z" fill="#b457b4" />
                  <path d="M8 17.500 13 5h2l4.500 12.500h-3l-1-3h-3.600l-1 3zM12.600 12h2.200l-1-3.800z" fill="#3f7cc9" stroke="#dbe8f7" strokeWidth=".5" />
                </BigSvg>
                <BigLabel>Change</BigLabel>
                <BigLabel>Styles<Caret /></BigLabel>
              </BigButton>
            </GroupBody>
            <Label>Styles</Label>
          </Group>

          <Group $w={44}>
            <GroupBody>
              <Stack>
                <SmallButton><Icon name="find" size={10} />Find<Caret /></SmallButton>
                <SmallButton><Icon name="replace" size={10} />Replace</SmallButton>
                <SmallButton><Icon name="pointer" size={10} />Select<Caret /></SmallButton>
              </Stack>
            </GroupBody>
            <Label launcher={false}>Editing</Label>
          </Group>
        </Ribbon>

        <Workspace>
          <Swoosh viewBox="0 0 300 100">
            <path d="M0 0H290Q70 30 0 95z" fill="#c3d9f2" opacity=".35" />
            <path d="M0 0H280Q80 34 0 76z" fill="#c6dcf2" opacity=".6" />
          </Swoosh>
          <Desk>
            <Page>
              <TextArea>
                <TableBlock $top={18}>
                  <DocTable />
                </TableBlock>
                <TableBlock $top={19}>
                  <DocTable selected />
                  <MoveHandle><Icon name="move" size={7} /></MoveHandle>
                  <SizeHandle />
                  <Menu role="menu">
                    {menuItems.map((m, i) =>
                      m ? (
                        <MenuItem key={i} role="menuitem" $on={m.on}>
                          <IconSlot>{m.icon && <Icon name={m.icon} size={10} />}</IconSlot>
                          <MenuText>{m.text[0]}<u>{m.text[1]}</u>{m.text[2]}</MenuText>
                          {m.sub && <SubArrow />}
                        </MenuItem>
                      ) : (
                        <Divider key={i} />
                      )
                    )}
                  </Menu>
                </TableBlock>
              </TextArea>
            </Page>
          </Desk>
          <ScrollCol>
            <Splitter />
            <IconButton aria-label="View ruler"><Icon name="ruler" size={9} /></IconButton>
            <Track>
              <ArrowButton aria-label="Scroll up"><DarkCaret $up /></ArrowButton>
              <Thumb><Grip /></Thumb>
            </Track>
            <ArrowButton aria-label="Scroll down"><DarkCaret /></ArrowButton>
            <PageNav>
              <DarkCaret $up />
              <Ball />
              <DarkCaret />
            </PageNav>
          </ScrollCol>
        </Workspace>

        <StatusBar>
          <StatusCell $p={4}>Page: 1 of 1</StatusCell>
          <StatusCell $p={5}>Words: 0</StatusCell>
          <StatusCell $p={3} $open><Icon name="proof" size={11} /></StatusCell>
          <StatusCell $p={5}>English (U.S.)</StatusCell>
          <StatusTools>
            <Views>
              {["viewPrint", "viewRead", "viewWeb", "viewOutline", "viewDraft"].map((v, i) => (
                <ViewButton key={v} aria-label={v} $on={i === 0}><Icon name={v} size={8} /></ViewButton>
              ))}
            </Views>
            <ZoomValue>100%</ZoomValue>
            <RoundButton aria-label="Zoom out"><Sign /></RoundButton>
            <Zoom type="range" aria-label="Zoom" min={10} max={190} defaultValue={100} />
            <RoundButton aria-label="Zoom in"><Sign $plus /></RoundButton>
          </StatusTools>
        </StatusBar>

        <TaskBar>
          <StartArea aria-label="Start">
            <svg viewBox="0 0 42 42" width="21" height="21">
              <defs>
                <radialGradient id="start" cx="50%" cy="85%" r="85%">
                  <stop offset="0" stopColor="#4fd0f0" />
                  <stop offset=".5" stopColor="#2a78b8" />
                  <stop offset="1" stopColor="#7fa8c8" />
                </radialGradient>
              </defs>
              <circle cx="21" cy="21" r="20" fill="url(#start)" stroke="#14507c" />
              <path d="M10 13q5-4 10-1l-2 8q-5-3-10 0z" fill="#f0642c" />
              <path d="M22 13q5 2 10-1l-2 8q-5 3-10 0z" fill="#8cc63e" />
              <path d="M8 22q5-3 10 0l-2 8q-5-3-10 0z" fill="#4aa8e8" />
              <path d="M20 22q5 3 10 0l-2 8q-5 3-10 0z" fill="#fcc62c" />
            </svg>
          </StartArea>
          {tasks.map(([icon, text], i) => (
            <Task key={text} $on={i === 0}>
              <Icon name={icon} size={10} />
              {text}
            </Task>
          ))}
          <Tray>
            <span>EN</span>
            <TrayCaret $up />
            <TrayIcons>
              <Icon name="network" size={9} />
              <Icon name="power" size={9} />
              <Icon name="volume" size={9} />
            </TrayIcons>
            <Clock>
              <span>16:39</span>
              <span>Sabtu</span>
            </Clock>
          </Tray>
        </TaskBar>
      </Screen>
    </>
  );
}
